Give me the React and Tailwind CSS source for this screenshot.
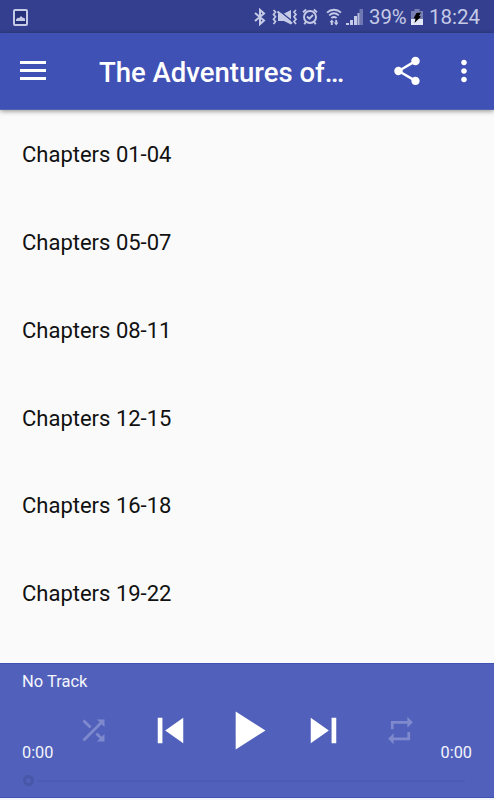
import React from 'react';

const chapters = [
    'Chapters 01-04',
    'Chapters 05-07',
    'Chapters 08-11',
    'Chapters 12-15',
    'Chapters 16-18',
    'Chapters 19-22',
];

function Icon({ d, className }) {
    return (
        <svg viewBox="0 0 24 24" fill="currentColor" className={`shrink-0 ${className}`}>
            <path d={d} />
        </svg>
    );
}

function StatusBar() {
    return (
        <div className="flex h-[33px] items-center bg-[#34408f] pl-[13px] pr-[12px] pt-px text-[#c5cae6]">
            {/* Screenshot notification */}
            <svg viewBox="0 0 15 17" className="h-[17px] w-[15px] shrink-0">
                <rect x="1" y="1" width="13" height="15" rx="1" fill="#26327b" stroke="currentColor" strokeWidth="2" />
                <path d="M3 12V10.5L5 8.5l1 .8L8 7l2 2 1-.6 1 1.6v2z" fill="currentColor" />
            </svg>

            <div className="ml-auto flex items-center">
                {/* Bluetooth */}
                <svg viewBox="0 0 12 18" fill="none" stroke="currentColor" strokeWidth="2" className="h-[18px] w-[12px]">
                    <path d="M1 5l9 7.500-4 3.600V1.900l4 3.600-9 7.500" />
                </svg>
                {/* Vibrate, sound off */}
                <svg viewBox="0 0 26 18" fill="none" stroke="currentColor" strokeWidth="1.7" className="ml-[6px] h-[18px] w-[26px]">
                    <path d="M1.500 2l2 2-2 2.400 2 2.400-2 2.400 2 2.400-2 2.400M24 2l-2 2 2 2.400-2 2.400 2 2.400-2 2.400 2 2.400" />
                    <path d="M6 5.500h6L19 2v14.500L12 13H6z" fill="currentColor" stroke="none" />
                    <path d="M7 2.500l13 10.500" stroke="#34408f" strokeWidth="1.500" />
                    <path d="M5.500 3.500L20 15.500" strokeWidth="2.200" />
                </svg>
                {/* Alarm */}
                <svg viewBox="0 0 16 18" fill="none" stroke="currentColor" strokeWidth="1.9" className="ml-[4px] h-[18px] w-[16px]">
                    <circle cx="8" cy="9" r="6" />
                    <path d="M1 4.200L4.200 1.500M15 4.200L11.800 1.500M3.800 14l-1.500 2.300M12.200 14l1.500 2.300" />
                    <path d="M5 8.500l2.400 2.200L11 7" />
                </svg>
                {/* Wi-Fi with traffic arrows */}
                <svg viewBox="0 0 16 18" fill="none" stroke="currentColor" strokeWidth="1.9" className="ml-[8px] h-[18px] w-[16px]">
                    <path d="M1 4.600c4-3.800 10-3.800 14 0M3.200 7.400c3-2.700 6.600-2.700 9.600 0M5.400 10c1.700-1.400 3.500-1.400 5.200 0" />
                    <path d="M5.800 17v-4M10.200 12v4" />
                    <path d="M3.500 14.300l2.300-2.800 2.300 2.800zM7.900 14.600l2.300 2.800 2.300-2.800z" fill="currentColor" stroke="none" />
                </svg>
                {/* Signal */}
                <svg viewBox="0 0 17 18" fill="currentColor" className="ml-[4px] h-[18px] w-[17px]">
                    <path d="M0 15h3v2H0zM4 12h3v5H4zM8 8h3v9H8z" />
                    <path d="M11.500 5h2v12h-2z" opacity="0.9" />
                    <path d="M13.500 1H17v16h-3.500z" opacity="0.4" />
                </svg>
                <span className="ml-[6px] w-[39px] whitespace-nowrap text-[20.300px] leading-[32px]">39%</span>
                {/* Battery, charging */}
                <svg viewBox="0 0 12 18" className="ml-[3px] h-[18px] w-[12px]">
                    <path d="M3.500 1h5v2H12v14H0V3h3.500z" fill="#7880b3" />
                    <path d="M0 11h12v6H0z" fill="#e4e7f6" />
                    <path d="M5.500 5L10 4.500 8 8l2 .5L3.500 15l1-4.500H2.500z" fill="#000" />
                </svg>
                <span className="ml-[6px] w-[53px] whitespace-nowrap text-[20.500px] leading-[32px]">18:24</span>
            </div>
        </div>
    );
}

function AppBar() {
    return (
        <header className="relative flex h-[77px] items-center border-b border-[#5361b0] bg-[#3f51b5] text-white shadow-[0_1px_5px_rgba(0,0,0,0.45)]">
            <button className="ml-[20px] mb-[2px] flex w-[26px] flex-col gap-[5px]">
                <span className="h-[3px] w-full bg-white" />
                <span className="h-[3px] w-full bg-white" />
                <span className="h-[3px] w-full bg-white" />
            </button>
            <h1 className="ml-[53px] w-[270px] whitespace-nowrap pt-[4px] text-[27.500px] font-medium leading-[36px]">The Adventures of…</h1>
            <Icon
                className="ml-[20.500px] size-[34px]"
                d="M18 16.080c-.76 0-1.440.3-1.960.77L8.910 12.700c.05-.23.090-.46.090-.7s-.04-.47-.090-.7l7.050-4.110c.54.5 1.250.81 2.040.81 1.660 0 3-1.340 3-3s-1.340-3-3-3-3 1.340-3 3c0 .24.040.47.090.7L8.040 9.810C7.500 9.310 6.790 9 6 9c-1.660 0-3 1.340-3 3s1.340 3 3 3c.79 0 1.500-.31 2.040-.81l7.120 4.160c-.05.21-.08.43-.08.65 0 1.610 1.310 2.920 2.920 2.920 1.610 0 2.920-1.310 2.920-2.920s-1.310-2.920-2.920-2.920z"
            />
            <Icon
                className="ml-[23.500px] size-[34px]"
                d="M12 8c1.100 0 2-.9 2-2s-.9-2-2-2-2 .9-2 2 .9 2 2 2zm0 2c-1.100 0-2 .9-2 2s.9 2 2 2 2-.9 2-2-.9-2-2-2zm0 6c-1.100 0-2 .9-2 2s.9 2 2 2 2-.9 2-2-.9-2-2-2z"
            />
        </header>
    );
}

function Player() {
    return (
        <footer className="h-[135px] border-y border-[#3f51b5] bg-[#5161bb] px-[22px] text-[16.500px] text-[#f4f5fb]">
            <p className="pt-[7px] leading-[22px]">No Track</p>
            <div className="flex h-[70px] items-end justify-between">
                <span className="w-[33px] text-[16.300px] leading-[20px]">0:00</span>
                <div className="grid h-full w-[384px] grid-cols-5 place-items-center pt-[4px] text-white">
                    <Icon
                        className="size-[33px] text-[#7e8acd]"
                        d="M10.590 9.170L5.410 4 4 5.410l5.170 5.170 1.420-1.410zM14.500 4l2.040 2.040L4 18.590 5.410 20 17.960 7.460 20 9.500V4h-5.500zm.33 9.410l-1.410 1.410 3.130 3.130L14.500 20H20v-5.500l-2.040 2.040-3.130-3.130z"
                    />
                    <Icon className="size-[51px]" d="M6 6h2.200v12H6zm3.500 6l8.500 6V6z" />
                    <Icon className="size-[65px]" d="M8 5v14l11-7z" />
                    <Icon className="size-[51px]" d="M6 18l8.500-6L6 6v12zM15.800 6v12H18V6h-2.200z" />
                    <Icon
                        className="size-[33px] text-[#7e8acd]"
                        d="M7 7h10v3l4-4-4-4v3H5v6h2V7zm10 10H7v-3l-4 4 4 4v-3h12v-6h-2v4z"
                    />
                </div>
                <span className="w-[33px] text-right text-[16.300px] leading-[20px]">0:00</span>
            </div>
            {/* Seek bar */}
            <div className="mt-[12px] flex items-center gap-[3px] pl-px">
                <span className="size-[11px] rounded-full border-[3px] border-[#4857a7]" />
                <span className="mr-[7px] h-[2px] flex-1 bg-[#4d5cb3]" />
            </div>
        </footer>
    );
}

export default function App() {
    return (
        <div className="flex h-[800px] w-[494px] flex-col overflow-hidden bg-[#fafafa] font-['Roboto',sans-serif]">
            <StatusBar />
            <AppBar />
            <ul className="flex-1 overflow-hidden pt-px text-[22px] text-[#111]">
                {chapters.map((chapter) => (
                    <li key={chapter} className="flex h-[87.750px] items-center px-[22px]">{chapter}</li>
                ))}
            </ul>
            <Player />
            <div className="h-[2px] bg-[#f4f5fb]" />
        </div>
    );
}
